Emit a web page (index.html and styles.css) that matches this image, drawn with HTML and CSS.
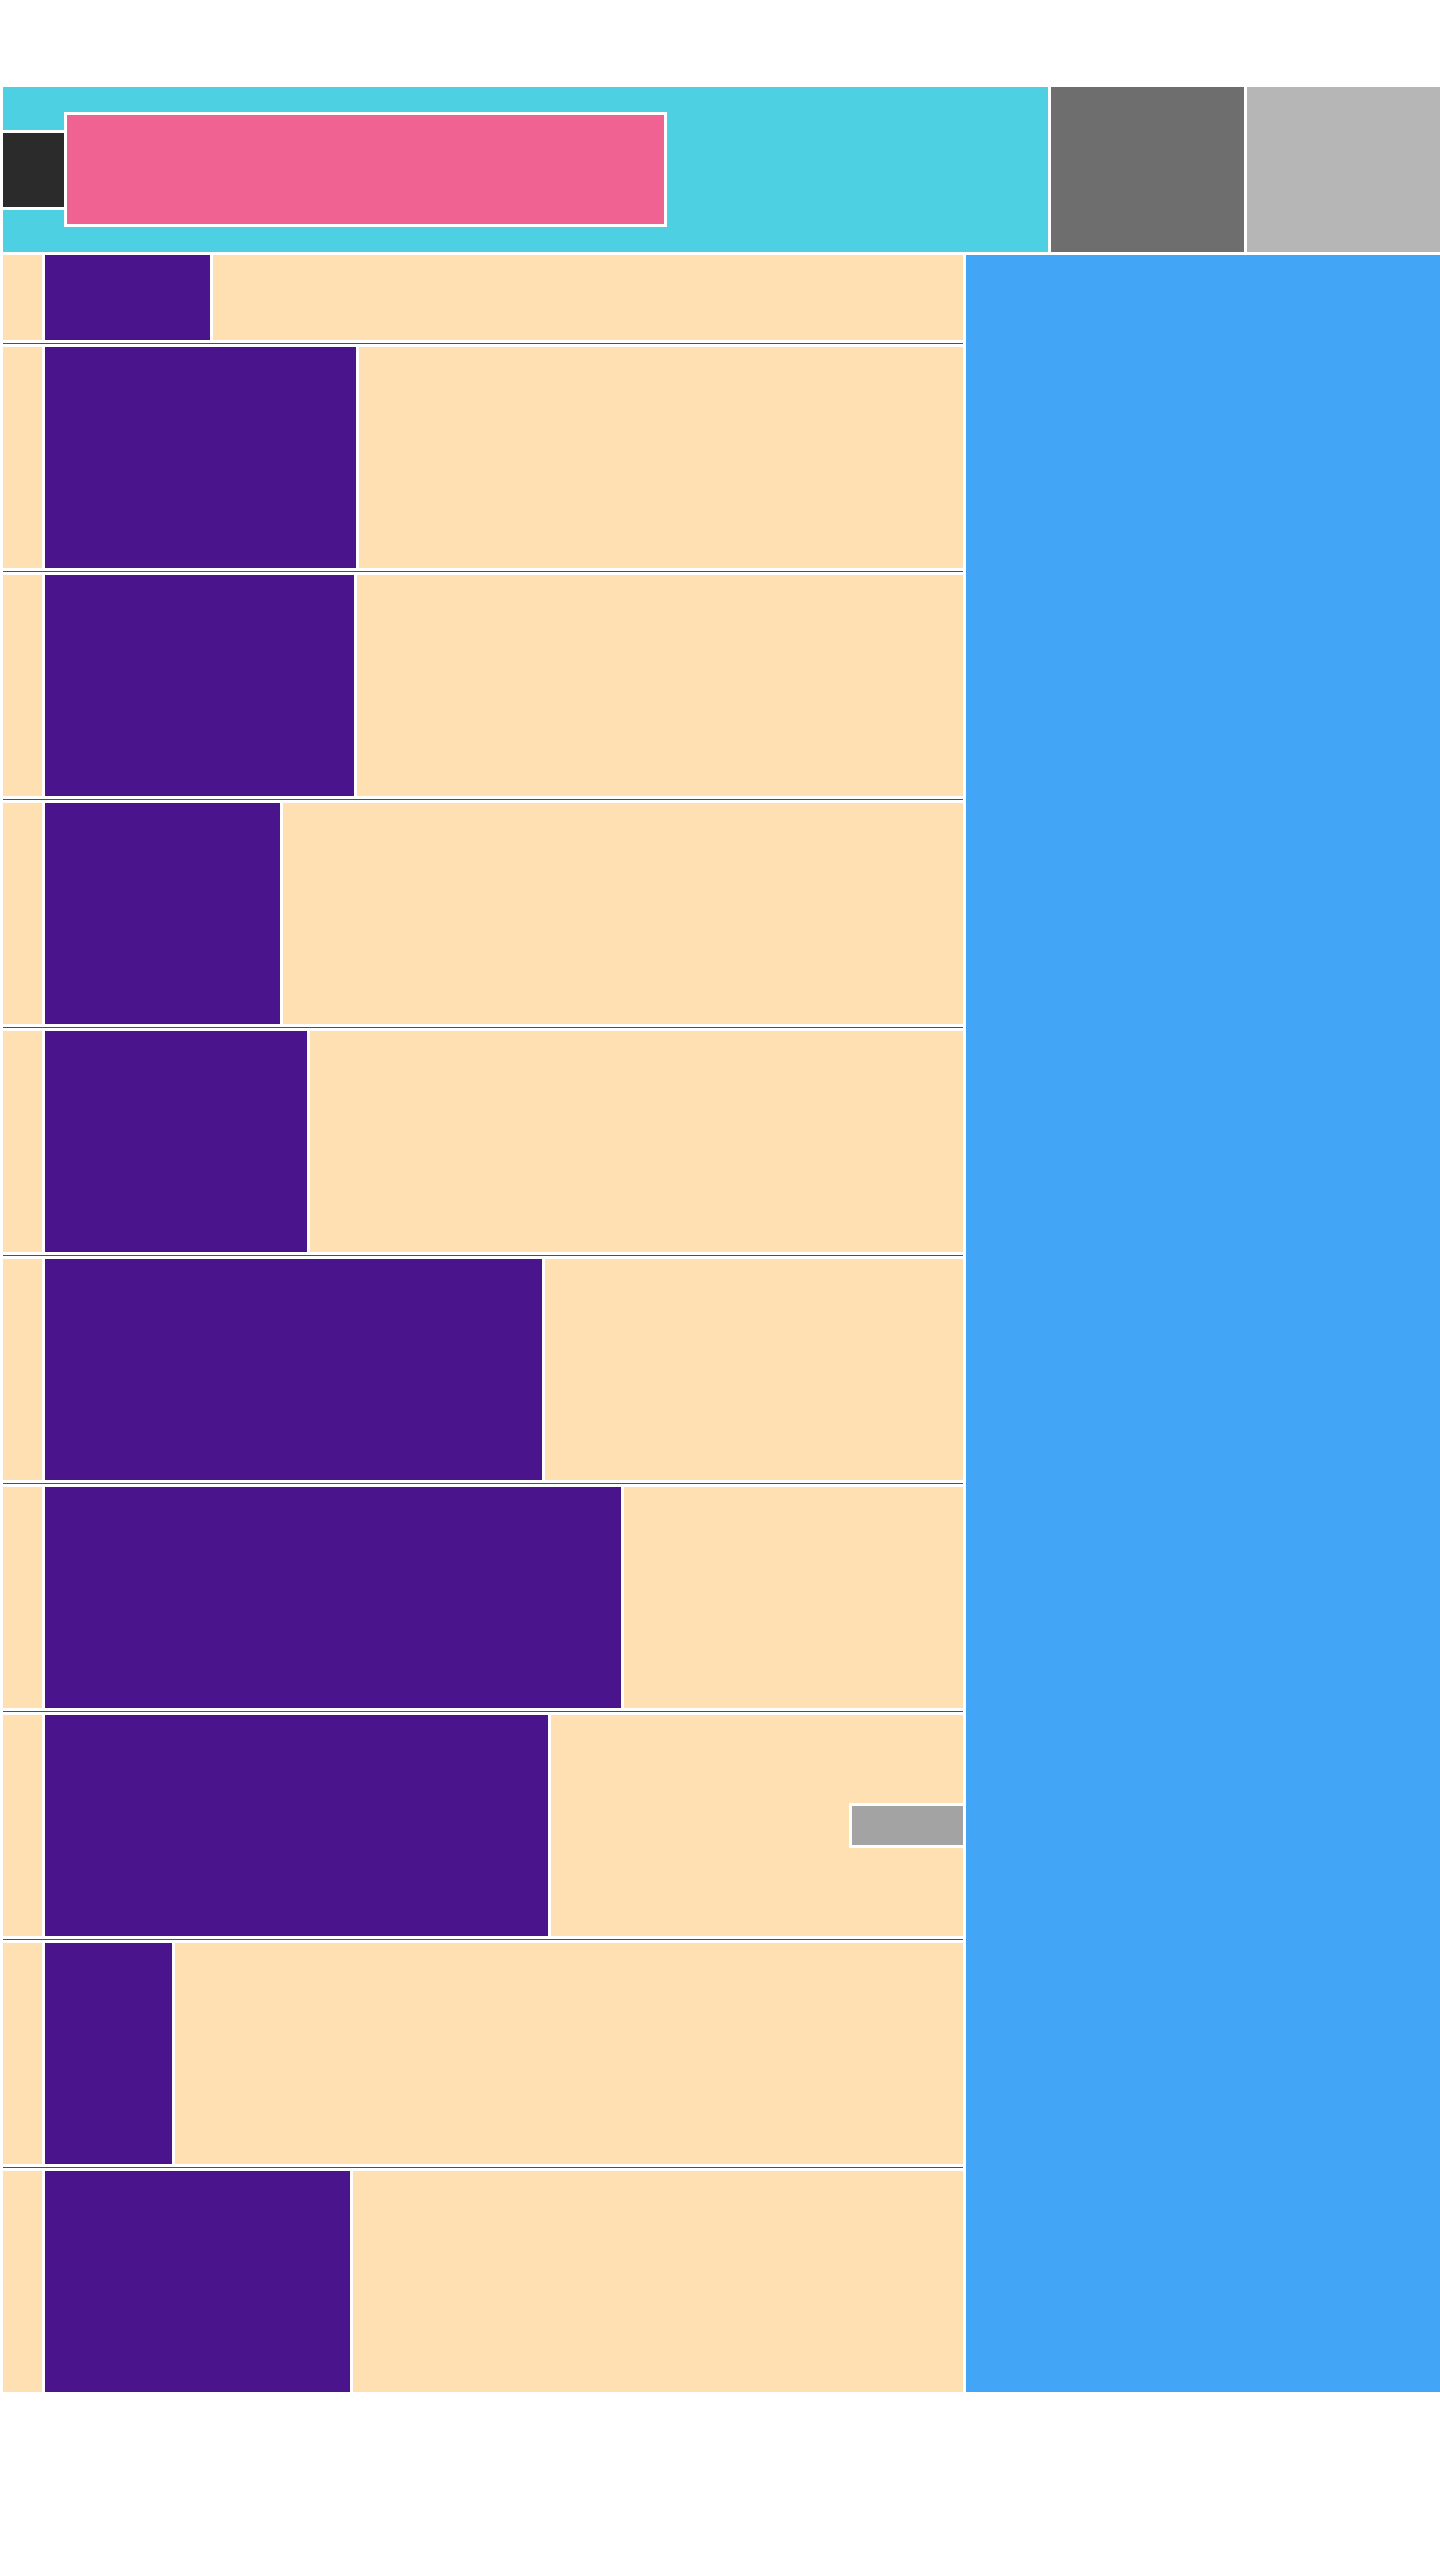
FILE: index.html
```html
<!DOCTYPE html>
<html lang="en">
<head>
<meta charset="utf-8">
<title>Layout</title>
<link rel="stylesheet" href="styles.css">
</head>
<body>
<div class="page">
  <header class="topbar">
    <div class="brand">
      <div class="brand-mark"></div>
      <div class="brand-banner"></div>
    </div>
    <div class="tile tile-dark"></div>
    <div class="tile tile-light"></div>
  </header>
  <main class="main">
    <section class="list">
      <div class="row row-short"><div class="lead"></div><div class="bar" style="width:165px"></div><div class="fill"></div></div>
      <div class="sep"></div>
      <div class="row"><div class="lead"></div><div class="bar" style="width:311px"></div><div class="fill"></div></div>
      <div class="sep"></div>
      <div class="row"><div class="lead"></div><div class="bar" style="width:309px"></div><div class="fill"></div></div>
      <div class="sep"></div>
      <div class="row"><div class="lead"></div><div class="bar" style="width:235px"></div><div class="fill"></div></div>
      <div class="sep"></div>
      <div class="row"><div class="lead"></div><div class="bar" style="width:262px"></div><div class="fill"></div></div>
      <div class="sep"></div>
      <div class="row"><div class="lead"></div><div class="bar" style="width:497px"></div><div class="fill"></div></div>
      <div class="sep"></div>
      <div class="row"><div class="lead"></div><div class="bar" style="width:576px"></div><div class="fill"></div></div>
      <div class="sep"></div>
      <div class="row"><div class="lead"></div><div class="bar" style="width:503px"></div><div class="fill fill-action"><div class="action"></div></div></div>
      <div class="sep"></div>
      <div class="row"><div class="lead"></div><div class="bar" style="width:127px"></div><div class="fill"></div></div>
      <div class="sep"></div>
      <div class="row"><div class="lead"></div><div class="bar" style="width:305px"></div><div class="fill"></div></div>
    </section>
    <aside class="aside"></aside>
  </main>
</div>
</body>
</html>
```

FILE: styles.css
```css
html, body {
  margin: 0;
  padding: 0;
  background: #ffffff;
  font-family: "Liberation Sans", Arial, sans-serif;
}

.page {
  padding: 87px 0 0 3px;
  width: 1437px;
}

.topbar {
  display: flex;
  gap: 3px;
  height: 165px;
  margin-bottom: 3px;
}

.brand {
  flex: 1;
  background: #4dd0e1;
  display: flex;
  align-items: center;
}

.brand-mark {
  width: 61px;
  height: 74px;
  background: #2b2b2b;
  border: 3px solid #ffffff;
  margin-left: -3px;
  flex-shrink: 0;
}

.brand-banner {
  width: 597px;
  height: 109px;
  background: #f06292;
  border: 3px solid #ffffff;
  margin-left: -3px;
  flex-shrink: 0;
}

.tile {
  width: 193px;
}

.tile-dark {
  background: #6e6e6e;
}

.tile-light {
  background: #b6b6b6;
}

.main {
  display: flex;
  gap: 3px;
}

.list {
  width: 960px;
  display: flex;
  flex-direction: column;
  background: #ffffff;
}

.aside {
  flex: 1;
  background: #42a5f5;
}

.row {
  display: flex;
  gap: 3px;
  height: 221px;
}

.row-short {
  height: 85px;
}

.lead {
  width: 39px;
  background: #ffe0b2;
  flex-shrink: 0;
}

.bar {
  background: #4a148c;
  flex-shrink: 0;
}

.fill {
  flex: 1;
  background: #ffe0b2;
}

.fill-action {
  display: flex;
  align-items: center;
  justify-content: flex-end;
}

.action {
  width: 111px;
  height: 39px;
  background: #a3a3a3;
  border: 3px solid #ffffff;
  margin-right: -3px;
  flex-shrink: 0;
}

.sep {
  height: 1px;
  margin: 3px 0;
  background: #5e35b1;
}
```
